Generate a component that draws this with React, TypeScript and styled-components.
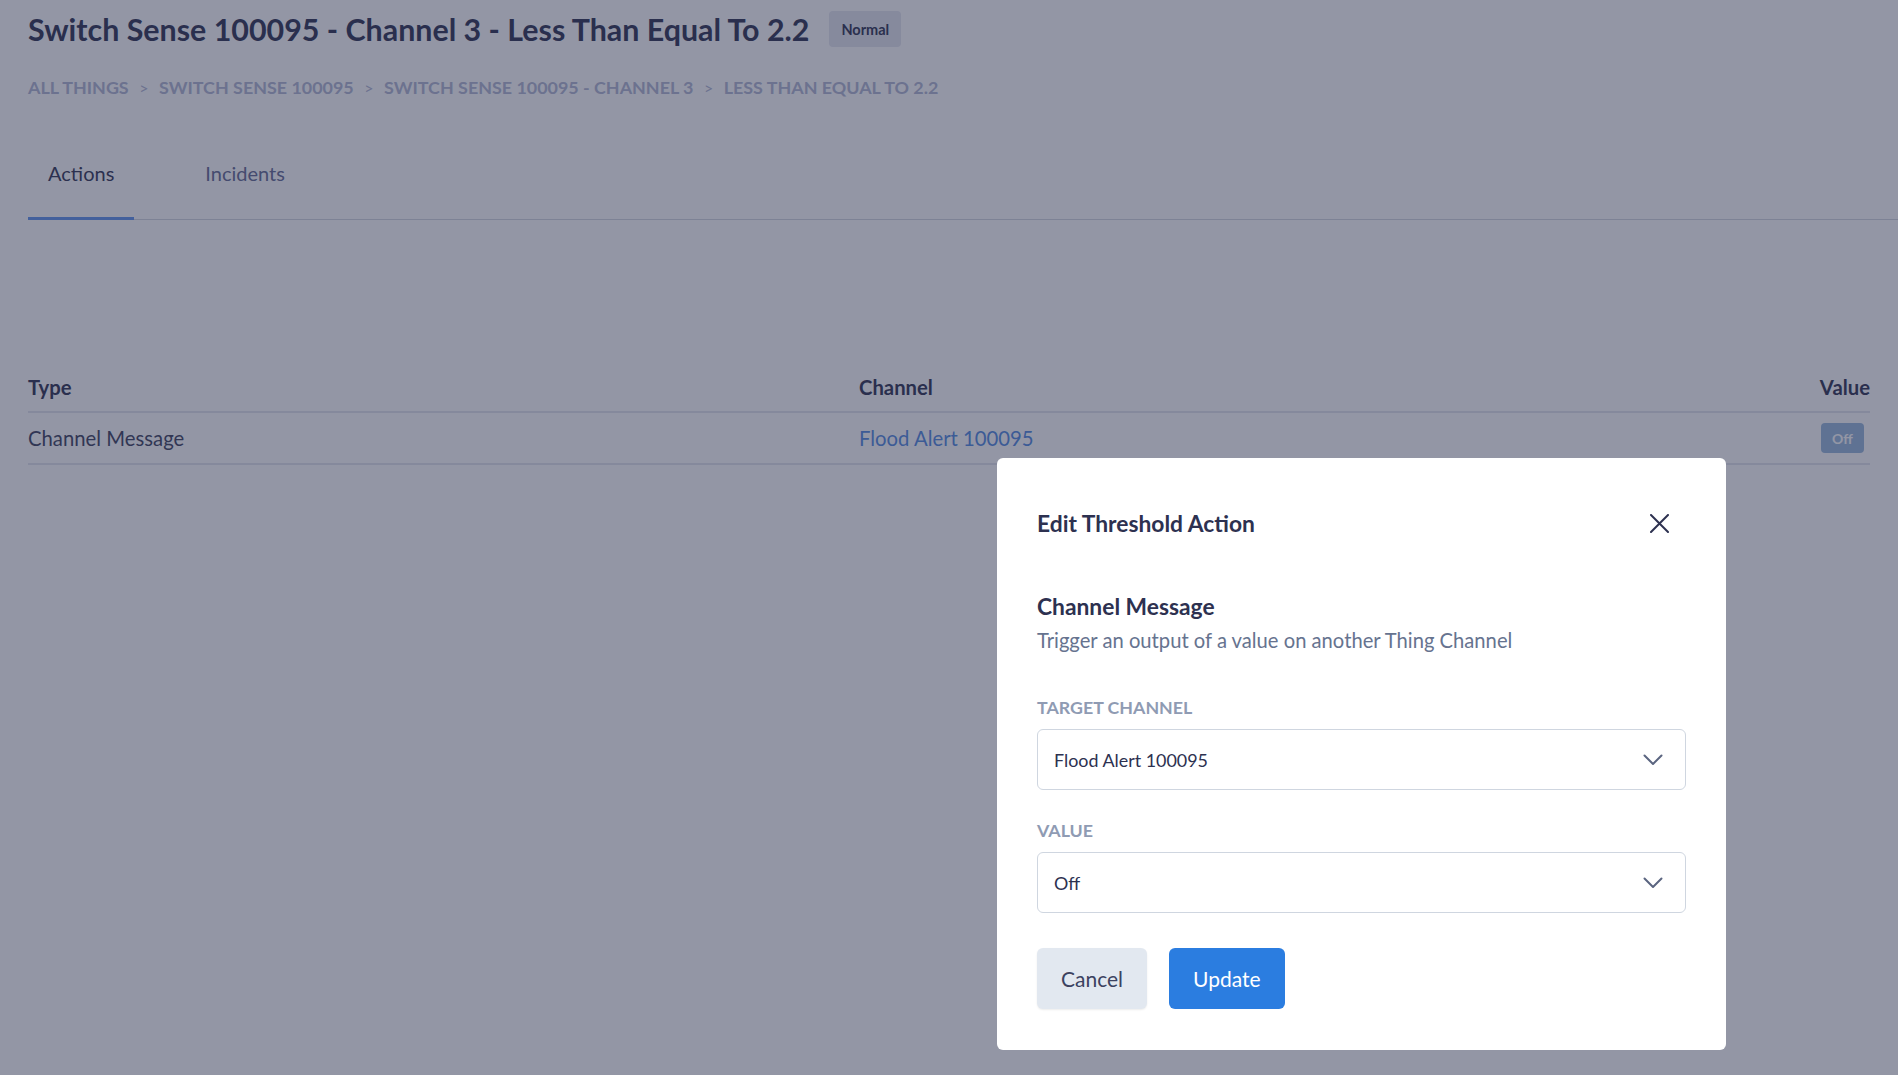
import React from 'react';
import styled, { createGlobalStyle } from 'styled-components';

const GlobalStyle = createGlobalStyle`
  html, body {
    margin: 0;
    padding: 0;
    background: #ffffff;
    font-family: 'Lato', 'Noto Sans', sans-serif;
    color: #2d3150;
    overflow: hidden;
  }
  * {
    box-sizing: border-box;
  }
`;

const crumbs = [
  'All Things',
  'Switch Sense 100095',
  'Switch Sense 100095 - Channel 3',
  'Less Than Equal To 2.2',
];

const Chevron = () => (
  <svg width="20" height="12" viewBox="0 0 20 12" fill="none">
    <polyline points="1.5,1.5 10,10 18.5,1.5" stroke="#5b6580" strokeWidth="2" strokeLinecap="round" strokeLinejoin="round" />
  </svg>
);

const CloseIcon = () => (
  <svg width="19" height="19" viewBox="0 0 19 19" fill="none">
    <path d="M1 1 L18 18 M18 1 L1 18" stroke="#2d3150" strokeWidth="2" strokeLinecap="round" />
  </svg>
);

const App: React.FC = () => {
  return (
    <>
      <GlobalStyle />
      <Page>
        <TitleRow>
          <Title>Switch Sense 100095 - Channel 3 - Less Than Equal To 2.2</Title>
          <StatusBadge>Normal</StatusBadge>
        </TitleRow>
        <Breadcrumbs>
          {crumbs.map((c, i) => (
            <React.Fragment key={c}>
              {i > 0 && <Separator>&gt;</Separator>}
              <Crumb>{c}</Crumb>
            </React.Fragment>
          ))}
        </Breadcrumbs>
        <Tabs>
          <Tab $active>Actions</Tab>
          <Tab>Incidents</Tab>
        </Tabs>
        <Table>
          <thead>
            <tr>
              <Th>Type</Th>
              <Th>Channel</Th>
              <Th $right>Value</Th>
            </tr>
          </thead>
          <tbody>
            <tr>
              <Td>Channel Message</Td>
              <Td>
                <ChannelLink href="#">Flood Alert 100095</ChannelLink>
              </Td>
              <Td $right>
                <ValuePill>Off</ValuePill>
              </Td>
            </tr>
          </tbody>
        </Table>
      </Page>

      <Overlay>
        <Modal>
          <ModalHeader>
            <ModalTitle>Edit Threshold Action</ModalTitle>
            <CloseButton aria-label="Close">
              <CloseIcon />
            </CloseButton>
          </ModalHeader>
          <ModalBody>
            <SectionTitle>Channel Message</SectionTitle>
            <SectionText>Trigger an output of a value on another Thing Channel</SectionText>

            <Fields>
              <Field>
                <Label>Target Channel</Label>
                <Select>
                  <span>Flood Alert 100095</span>
                  <Chevron />
                </Select>
              </Field>

              <Field>
                <Label>Value</Label>
                <Select>
                  <span>Off</span>
                  <Chevron />
                </Select>
              </Field>
            </Fields>

            <Buttons>
              <Button>Cancel</Button>
              <Button $primary>Update</Button>
            </Buttons>
          </ModalBody>
        </Modal>
      </Overlay>
    </>
  );
};

export default App;

const Page = styled.div`
  min-height: 1075px;
  padding: 11px 28px 0 28px;
`;

const TitleRow = styled.div`
  display: flex;
  align-items: center;
  gap: 20px;
`;

const Title = styled.h1`
  margin: 0;
  font-size: 30.4px;
  font-weight: 700;
  color: #2d3150;
  line-height: 36px;
`;

const StatusBadge = styled.span`
  display: inline-flex;
  align-items: center;
  height: 36px;
  padding: 0 12px;
  border-radius: 4px;
  background: #e4e6ef;
  font-size: 14.5px;
  font-weight: 700;
  color: #2d3150;
`;

const Breadcrumbs = styled.nav`
  display: flex;
  align-items: center;
  margin-top: 28px;
  height: 24px;
`;

const Crumb = styled.span`
  font-size: 17.9px;
  font-weight: 700;
  text-transform: uppercase;
  color: #b0b6d2;
`;

const Separator = styled.span`
  margin: 0 10.5px;
  font-size: 16px;
  color: #b0b6d2;
`;

const Tabs = styled.div`
  display: flex;
  margin-top: 29px;
  margin-right: -28px;
  border-bottom: 1px solid #d3d6de;
  gap: 51px;
`;

const Tab = styled.div<{ $active?: boolean }>`
  padding: 0 20px;
  height: 92px;
  display: flex;
  align-items: center;
  font-size: 20px;
  color: ${(p) => (p.$active ? '#2f3252' : '#626892')};
  border-bottom: 3px solid ${(p) => (p.$active ? '#5f93ec' : 'transparent')};
  margin-bottom: -1px;
`;

const Table = styled.table`
  width: 100%;
  border-collapse: collapse;
  margin-top: 143px;
`;

const Th = styled.th<{ $right?: boolean }>`
  text-align: ${(p) => (p.$right ? 'right' : 'left')};
  font-size: 20.3px;
  font-weight: 700;
  color: #2d3150;
  padding: 12px 0;
  border-bottom: 2px solid #e3e5ec;
  &:first-child {
    width: 831px;
  }
`;

const Td = styled.td<{ $right?: boolean }>`
  text-align: ${(p) => (p.$right ? 'right' : 'left')};
  font-size: 20.3px;
  color: #3a3e5c;
  height: 52px;
  padding: 0;
  border-bottom: 2px solid #e3e5ec;
  vertical-align: middle;
`;

const ChannelLink = styled.a`
  color: #5088e0;
  text-decoration: none;
`;

const ValuePill = styled.span`
  display: inline-flex;
  align-items: center;
  justify-content: center;
  width: 43px;
  height: 30px;
  margin-right: 6px;
  border-radius: 4px;
  background: #97b7da;
  color: #ffffff;
  font-size: 14px;
  font-weight: 700;
`;

const Overlay = styled.div`
  position: fixed;
  inset: 0;
  background: rgba(40, 45, 75, 0.5);
`;

const Modal = styled.div`
  position: absolute;
  left: 997px;
  top: 458px;
  width: 729px;
  background: #ffffff;
  border-radius: 6px;
  padding: 40px 40px 41px 40px;
`;

const ModalHeader = styled.div`
  display: flex;
  align-items: center;
  justify-content: space-between;
  height: 50px;
`;

const ModalTitle = styled.h2`
  margin: 0;
  font-size: 22.8px;
  font-weight: 700;
  color: #2d3150;
`;

const CloseButton = styled.button`
  display: flex;
  align-items: center;
  justify-content: center;
  width: 40px;
  height: 40px;
  margin-right: 7px;
  background: none;
  border: none;
  padding: 0;
  cursor: pointer;
`;

const ModalBody = styled.div`
  padding-top: 43px;
`;

const SectionTitle = styled.h3`
  margin: 0;
  font-size: 22.8px;
  font-weight: 700;
  line-height: 30px;
  color: #2d3150;
`;

const SectionText = styled.p`
  margin: 6px 0 0 0;
  font-size: 20.2px;
  line-height: 26px;
  color: #66738f;
`;

const Fields = styled.div`
  display: flex;
  flex-direction: column;
  gap: 30px;
  margin-top: 44px;
`;

const Field = styled.div`
  display: flex;
  flex-direction: column;
  gap: 12px;
`;

const Label = styled.label`
  font-size: 17.8px;
  font-weight: 700;
  text-transform: uppercase;
  color: #8f9bb3;
  line-height: 20px;
`;

const Select = styled.div`
  display: flex;
  align-items: center;
  justify-content: space-between;
  height: 61px;
  padding: 0 22px 0 16px;
  border: 1px solid #cfd6e0;
  border-radius: 6px;
  font-size: 17.9px;
  color: #2d3150;
`;

const Buttons = styled.div`
  display: flex;
  gap: 22px;
  margin-top: 35px;
`;

const Button = styled.button<{ $primary?: boolean }>`
  height: 61px;
  padding: 0 24px;
  border: none;
  border-radius: 6px;
  font-family: 'Lato', 'Noto Sans', sans-serif;
  font-size: 21px;
  cursor: pointer;
  background: ${(p) => (p.$primary ? '#2b7de0' : '#e2e8f0')};
  color: ${(p) => (p.$primary ? '#ffffff' : '#3c4260')};
  box-shadow: ${(p) => (p.$primary ? 'none' : '0 1px 2px rgba(0, 0, 0, 0.08)')};
`;
